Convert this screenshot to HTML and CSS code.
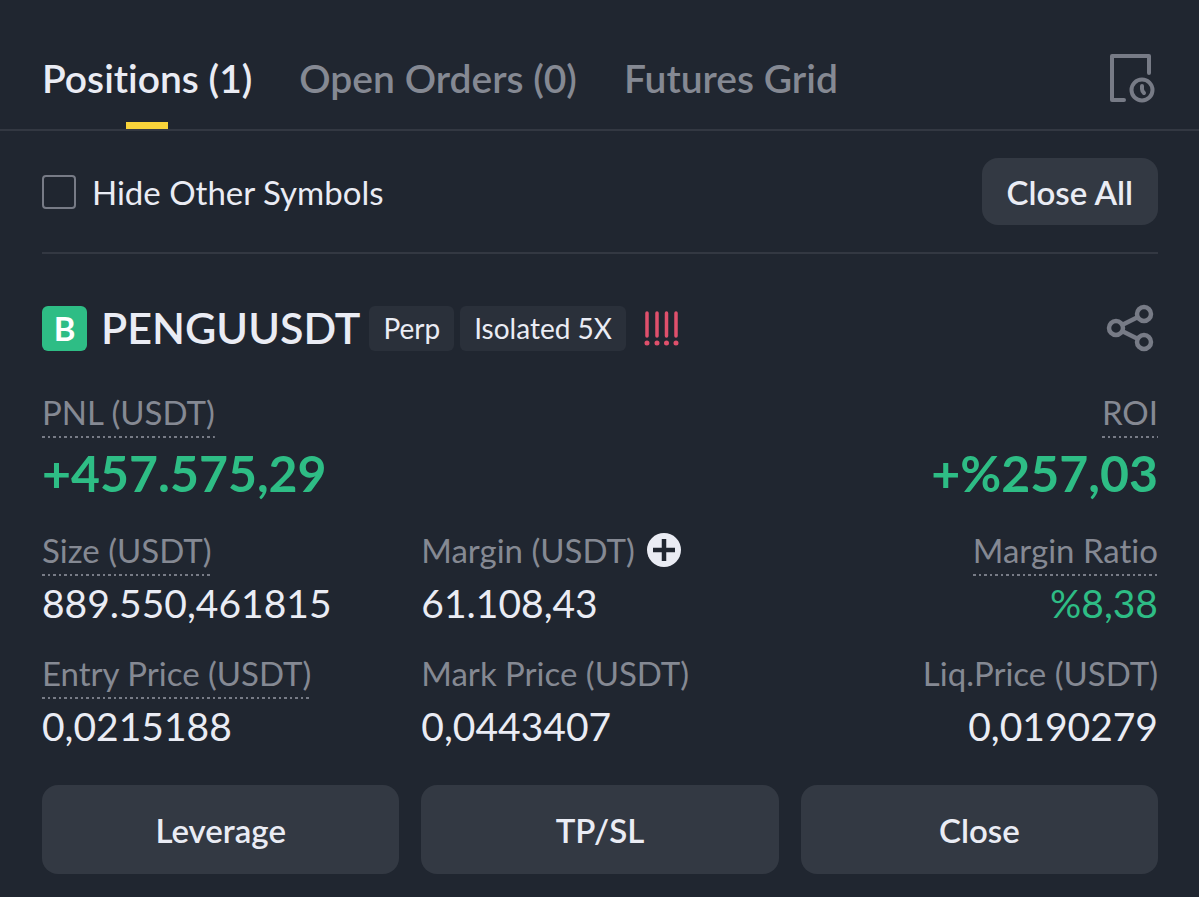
FILE: index.html
```html
<!DOCTYPE html>
<html lang="en">
<head>
<meta charset="utf-8">
<meta name="viewport" content="width=device-width, initial-scale=1">
<title>Positions</title>
<link rel="stylesheet" href="styles.css">
</head>
<body>
<header class="topbar">
  <nav class="tabs">
    <button class="tab tab-active" type="button">Positions (1)</button>
    <button class="tab" type="button">Open Orders (0)</button>
    <button class="tab" type="button">Futures Grid</button>
  </nav>
  <button class="icon-button" type="button" aria-label="Order history">
    <svg width="48" height="52" viewBox="0 0 48 52" fill="none" stroke="currentColor" stroke-width="4" stroke-linecap="round" stroke-linejoin="round">
      <path d="M16 48H4V4H41V21"/>
      <circle cx="34" cy="38" r="10.500"/>
      <path d="M34 34V37Q34 39 36 41"/>
    </svg>
  </button>
</header>
<main class="content">
  <div class="filter">
    <label class="check"><input class="check-box" type="checkbox"><span>Hide Other Symbols</span></label>
    <button class="close-all" type="button">Close All</button>
  </div>
  <section class="position">
    <div class="symbol">
      <span class="side">B</span>
      <h1 class="name">PENGUUSDT</h1>
      <div class="tags">
        <span class="tag">Perp</span>
        <span class="tag">Isolated 5X</span>
      </div>
      <svg class="risk" width="36" height="36" viewBox="0 0 36 36" role="img" aria-label="Risk level" stroke="currentColor" stroke-width="3.500" stroke-linecap="round">
        <path d="M3 3V26M13 3V26M22.500 3V26M32 3V26"/>
        <path d="M3 33V33.010M13 33V33.010M22.500 33V33.010M32 33V33.010" stroke-width="5"/>
      </svg>
      <button class="icon-button share" type="button" aria-label="Share">
        <svg width="48" height="48" viewBox="0 0 48 48" fill="none" stroke="currentColor" stroke-width="4.500">
          <circle cx="10" cy="24" r="7"/>
          <circle cx="38" cy="10" r="7"/>
          <circle cx="38" cy="38" r="7"/>
          <path d="M16 21L32 13M16 27L32 35"/>
        </svg>
      </button>
    </div>
    <dl class="stats">
      <div class="stat stat-wide">
        <dt class="label"><span class="hint">PNL (USDT)</span></dt>
        <dd class="value value-big up">+457.575,29</dd>
      </div>
      <div class="stat stat-end">
        <dt class="label"><span class="hint">ROI</span></dt>
        <dd class="value value-big up">+%257,03</dd>
      </div>
      <div class="stat">
        <dt class="label"><span class="hint">Size (USDT)</span></dt>
        <dd class="value">889.550,461815</dd>
      </div>
      <div class="stat">
        <dt class="label"><span>Margin (USDT)</span>
          <button class="add" type="button" aria-label="Add margin">
            <svg width="34" height="34" viewBox="0 0 34 34"><circle cx="17" cy="17" r="17" fill="#eaecf4"/><path d="M17 6V28M6 17H28" stroke="#202630" stroke-width="4.500"/></svg>
          </button>
        </dt>
        <dd class="value">61.108,43</dd>
      </div>
      <div class="stat stat-end">
        <dt class="label"><span class="hint">Margin Ratio</span></dt>
        <dd class="value up">%8,38</dd>
      </div>
      <div class="stat">
        <dt class="label"><span class="hint">Entry Price (USDT)</span></dt>
        <dd class="value">0,0215188</dd>
      </div>
      <div class="stat">
        <dt class="label"><span>Mark Price (USDT)</span></dt>
        <dd class="value">0,0443407</dd>
      </div>
      <div class="stat stat-end">
        <dt class="label"><span>Liq.Price (USDT)</span></dt>
        <dd class="value">0,0190279</dd>
      </div>
    </dl>
    <div class="actions">
      <button class="action" type="button">Leverage</button>
      <button class="action" type="button">TP/SL</button>
      <button class="action" type="button">Close</button>
    </div>
  </section>
</main>
</body>
</html>
```
FILE: styles.css
```css
* {
  box-sizing: border-box;
}

body {
  margin: 0;
  background: #202630;
  color: #eaecf4;
  font-family: Lato, "Open Sans", sans-serif;
  font-size: 33px;
  font-variant-ligatures: none;
}

button {
  margin: 0;
  padding: 0;
  border: 0;
  background: none;
  color: inherit;
  font: inherit;
  cursor: pointer;
}

.topbar {
  display: flex;
  justify-content: space-between;
  align-items: center;
  padding: 26px 43px 0 42px;
  border-bottom: 2px solid #333842;
}

.tabs {
  display: flex;
  gap: 47px;
}

.tab {
  position: relative;
  height: 103px;
  color: #858993;
  font-size: 39px;
  font-weight: 600;
}

.tab-active {
  color: #eaecf4;
}

.tab-active::after {
  content: "";
  position: absolute;
  bottom: 0;
  left: 50%;
  width: 42px;
  height: 7px;
  margin-left: -21px;
  background: #f8d33a;
}

.icon-button {
  display: flex;
  color: #777b86;
}

.content {
  padding: 0 41px 22px 42px;
}

.filter {
  display: flex;
  justify-content: space-between;
  align-items: center;
  padding: 27px 0;
  border-bottom: 2px solid #333842;
}

.check {
  display: flex;
  align-items: center;
  gap: 16px;
  line-height: 38px;
}

.check-box {
  appearance: none;
  width: 34px;
  height: 34px;
  margin: 0;
  border: 2px solid #777b86;
  border-radius: 4px;
}

.check-box:checked {
  background: #f8d33a;
}

.close-all {
  height: 67px;
  padding: 0 25px;
  border-radius: 16px;
  background: #333943;
  font-weight: 600;
}

.symbol {
  display: flex;
  align-items: center;
  padding: 50px 4px 43px 0;
}

.side {
  display: grid;
  place-items: center;
  width: 45px;
  height: 45px;
  margin-right: 14px;
  border-radius: 6px;
  background: #2ebd85;
  color: #fff;
  font-size: 33px;
  font-weight: 700;
}

.name {
  margin: 0 9px 0 0;
  font-size: 43px;
  font-weight: 600;
  line-height: 48px;
}

.tags {
  display: flex;
  gap: 6px;
}

.tag {
  padding: 0 14px;
  border-radius: 6px;
  background: #2a303a;
  font-size: 28px;
  line-height: 45px;
}

.risk {
  margin-left: 18px;
  color: #e0506c;
}

.share {
  margin-left: auto;
}

.stats {
  display: grid;
  grid-template-columns: repeat(3, 1fr);
  gap: 30px 22px;
  margin: 0;
}

.stat {
  display: flex;
  flex-direction: column;
  gap: 5px;
}

.stat-wide {
  grid-column: span 2;
}

.stat-end {
  align-items: flex-end;
}

.label {
  display: flex;
  align-items: flex-start;
  gap: 12px;
  height: 43px;
  color: #858993;
  line-height: 34px;
}

.hint {
  height: 43px;
  background: repeating-linear-gradient(90deg, #777b86 0 3px, transparent 3px 6px, #777b86 6px 8px, transparent 8px 11px) bottom / 100% 2px no-repeat;
}

.add {
  display: flex;
}

.value {
  margin: 0;
  font-size: 39px;
  line-height: 45px;
}

.value-big {
  font-size: 50px;
  font-weight: 700;
  line-height: 60px;
}

.up {
  color: #2ebd85;
}

.actions {
  display: grid;
  grid-template-columns: repeat(3, 1fr);
  gap: 22px;
  margin-top: 36px;
}

.action {
  height: 89px;
  border-radius: 16px;
  background: #333943;
  font-weight: 600;
}
```
